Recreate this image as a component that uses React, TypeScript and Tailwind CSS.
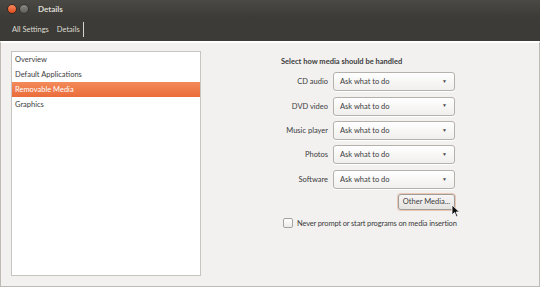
import React from "react";

const font = { fontFamily: 'Lato, "Open Sans", sans-serif' };

function Combo() {
  return (
    <div className="flex h-[19px] w-[122px] items-center justify-between rounded-[3px] border border-[#b5b2ad] bg-gradient-to-b from-[#ffffff] to-[#f0efed] pl-[6px] pr-[7px] text-[7.5px] text-[#3c3c3c] shadow-[0_1px_0_#ffffff]">
      <span>Ask what to do</span>
      <span className="text-[5px] text-[#4c4c4c]">▼</span>
    </div>
  );
}

export default function App() {
  const rows = ["CD audio", "DVD video", "Music player", "Photos", "Software"];
  const items = ["Overview", "Default Applications", "Removable Media", "Graphics"];
  return (
    <div className="flex h-[287px] w-[540px] flex-col overflow-hidden bg-[#f2f1f0]" style={font}>
      <div className="flex h-[18px] items-center bg-gradient-to-b from-[#4a4944] to-[#3c3b37] pl-[7px]">
        <div className="h-[10px] w-[10px] rounded-full border border-[#3a2a20] bg-gradient-to-b from-[#f58a5e] to-[#df4a16]" />
        <div className="ml-[2px] h-[10px] w-[10px] rounded-full border border-[#33322e] bg-gradient-to-b from-[#8a8984] to-[#5e5d59]" />
        <span className="ml-[9px] text-[8px] font-bold text-[#dfdbd2]">Details</span>
      </div>
      <div className="flex h-[23px] items-center bg-[#3c3b37] pl-[12px] text-[7.5px] text-[#dfdbd2]">
        <span>All Settings</span>
        <span className="ml-[8px]">Details</span>
        <div className="ml-[3px] h-[15px] w-px bg-[#d8d5ce]" />
      </div>
      <div className="flex flex-1 border-x border-b border-t-2 border-[#bebab3] border-t-[#ffffff]">
        <div className="mb-[10px] ml-[10px] mt-[8px] w-[190px] border border-[#c8c5c0] bg-white text-[7.5px] text-[#3c3c3c]">
          {items.map((t) =>
            t === "Removable Media" ? (
              <div key={t} className="flex h-[15px] items-center bg-gradient-to-b from-[#f38a5a] to-[#ea6c3a] pl-[3px] text-white">
                {t}
              </div>
            ) : (
              <div key={t} className="flex h-[15px] items-center pl-[3px]">
                {t}
              </div>
            )
          )}
        </div>
        <div className="ml-[80px] flex w-[174px] flex-col pt-[13px]">
          <div className="text-[7.5px] font-bold text-[#3c3c3c]">Select how media should be handled</div>
          <div className="mt-[5px] flex flex-col gap-[5.4px]">
            {rows.map((r) => (
              <div key={r} className="flex items-center">
                <div className="w-[52px] shrink-0 whitespace-nowrap pr-[5px] text-right text-[7.5px] text-[#3c3c3c]">{r}</div>
                <Combo />
              </div>
            ))}
          </div>
          <div className="mt-[5px] flex justify-end">
            <div className="relative flex h-[16px] items-center rounded-[3px] border border-[#a09d98] bg-gradient-to-b from-[#f7f6f5] to-[#e5e3e0] px-[4px] text-[7.5px] text-[#3c3c3c] shadow-[0_0_0_1px_#e8c7b5]">
              Other Media...
              <svg className="absolute right-[-7px] top-[9px]" width="10" height="14" viewBox="0 0 10 14">
                <path d="M1 1 L1 11 L3.5 8.5 L5.5 13 L7 12.3 L5 8 L8.5 8 Z" fill="#111" stroke="#fff" strokeWidth="0.8" />
              </svg>
            </div>
          </div>
          <div className="mt-[8px] flex items-center pl-[2px]">
            <div className="h-[10px] w-[10px] shrink-0 rounded-[2px] border border-[#a5a29d] bg-gradient-to-b from-white to-[#ecebe9]" />
            <span className="ml-[4px] whitespace-nowrap text-[7.5px] tracking-[-0.15px] text-[#3c3c3c]">Never prompt or start programs on media insertion</span>
          </div>
        </div>
      </div>
    </div>
  );
}
